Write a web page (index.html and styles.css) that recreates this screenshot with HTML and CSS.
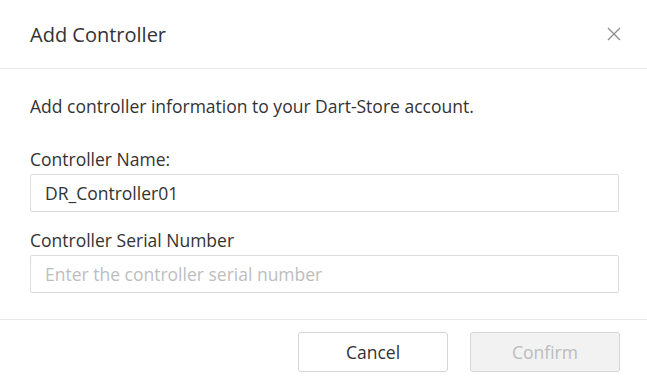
FILE: index.html
```html
<!DOCTYPE html>
<html lang="en">
<head>
  <meta charset="UTF-8">
  <title>Add Controller</title>
  <link rel="stylesheet" href="styles.css">
</head>
<body>

  <div class="dialog">
    <div class="dialog-header">
      <h2 class="dialog-title">Add Controller</h2>
      <button class="close-btn" aria-label="Close">
        <svg width="14" height="14" viewBox="0 0 14 14">
          <path d="M1 1 L13 13 M13 1 L1 13" stroke="#8c8c8c" stroke-width="1.3" fill="none"/>
        </svg>
      </button>
    </div>

    <div class="dialog-body">
      <p class="intro">Add controller information to your Dart-Store account.</p>

      <div class="field">
        <label for="ctrl-name">Controller Name:</label>
        <input id="ctrl-name" type="text" value="DR_Controller01">
      </div>

      <div class="field">
        <label for="ctrl-serial">Controller Serial Number</label>
        <input id="ctrl-serial" type="text" placeholder="Enter the controller serial number">
      </div>
    </div>

    <div class="dialog-footer">
      <button class="btn">Cancel</button>
      <button class="btn btn-disabled" disabled>Confirm</button>
    </div>
  </div>

</body>
</html>
```

FILE: styles.css
```css
body {
  margin: 0;
  background: #fff;
  font-family: 'Open Sans', 'Noto Sans', sans-serif;
  color: #333;
}

.dialog {
  width: 647px;
  height: 388px;
  background: #fff;
}

.dialog-header {
  height: 68px;
  display: flex;
  align-items: center;
  justify-content: space-between;
  padding: 0 26px 0 30px;
  border-bottom: 1px solid #e8e8e8;
}

.dialog-title {
  margin: 0;
  font-size: 20px;
  font-weight: normal;
  color: #333;
}

.close-btn {
  border: none;
  background: none;
  padding: 0;
  width: 14px;
  height: 14px;
  cursor: pointer;
  display: flex;
}

.dialog-body {
  padding: 22px 28px 26px 30px;
}

.intro {
  margin: 0 0 27px;
  font-size: 17.5px;
  line-height: 30px;
}

.field {
  margin-bottom: 17px;
}

.field:last-child {
  margin-bottom: 0;
}

.field label {
  display: block;
  font-size: 17.5px;
  line-height: 22px;
  margin-bottom: 4px;
}

.field input {
  box-sizing: border-box;
  display: block;
  width: 100%;
  height: 38px;
  padding: 0 14px;
  border: 1px solid #dcdcdc;
  border-radius: 2px;
  font-family: inherit;
  font-size: 17.5px;
  color: #333;
  outline: none;
}

.field input::placeholder {
  color: #bdbdbd;
}

.dialog-footer {
  display: flex;
  justify-content: flex-end;
  gap: 22px;
  padding: 12px 27px 16px 0;
  border-top: 1px solid #e8e8e8;
}

.btn {
  width: 150px;
  height: 40px;
  border: 1px solid #d6d6d6;
  border-radius: 3px;
  background: #fff;
  font-family: inherit;
  font-size: 17.5px;
  color: #333;
  cursor: pointer;
}

.btn-disabled {
  background: #f2f2f2;
  color: #bcbcbc;
  cursor: default;
}
```
